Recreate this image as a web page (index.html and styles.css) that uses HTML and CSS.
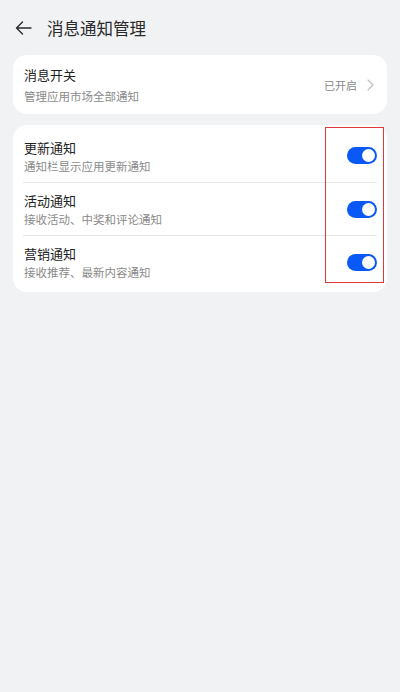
FILE: index.html
```html
<!DOCTYPE html>
<html lang="zh-CN">
<head>
  <meta charset="UTF-8">
  <meta name="viewport" content="width=device-width, initial-scale=1.0">
  <title>消息通知管理</title>
  <link rel="stylesheet" href="styles.css">
</head>
<body>
  <!-- 顶部标题栏 -->
  <div class="header">
    <svg class="back" width="17" height="14" viewBox="0 0 17 14">
      <path d="M16 7H1.5M7.5 1L1.5 7L7.5 13" fill="none" stroke="#2a2a2a" stroke-width="1.4" stroke-linecap="round" stroke-linejoin="round"/>
    </svg>
    <h1>消息通知管理</h1>
  </div>

  <!-- 总开关 -->
  <div class="card">
    <div class="row row-main">
      <div class="text">
        <div class="title">消息开关</div>
        <div class="sub">管理应用市场全部通知</div>
      </div>
      <div class="state">
        已开启
        <svg width="7" height="12" viewBox="0 0 7 12">
          <path d="M1 1L6 6L1 11" fill="none" stroke="#bdbdbd" stroke-width="1.1" stroke-linecap="round" stroke-linejoin="round"/>
        </svg>
      </div>
    </div>
  </div>

  <!-- 分类通知 -->
  <div class="card card-list">
    <div class="row">
      <div class="text">
        <div class="title">更新通知</div>
        <div class="sub">通知栏显示应用更新通知</div>
      </div>
      <span class="switch on"></span>
    </div>
    <div class="row">
      <div class="text">
        <div class="title">活动通知</div>
        <div class="sub">接收活动、中奖和评论通知</div>
      </div>
      <span class="switch on"></span>
    </div>
    <div class="row">
      <div class="text">
        <div class="title">营销通知</div>
        <div class="sub">接收推荐、最新内容通知</div>
      </div>
      <span class="switch on"></span>
    </div>
    <div class="mark"></div>
  </div>
</body>
</html>
```

FILE: styles.css
```css
body {
  margin: 0;
  height: 692px;
  background-color: #f1f2f4;
  font-family: "Noto Sans CJK SC", "Noto Sans", sans-serif;
  color: #222;
}
.header {
  display: flex;
  align-items: center;
  height: 55px;
  padding-left: 15px;
}
.back {
  display: block;
}
.header h1 {
  margin: 0 0 0 15px;
  font-size: 16.5px;
  font-weight: 400;
  color: #2a2a2a;
}
.card {
  margin: 0 13px;
  padding: 0 10px;
  background-color: #fff;
  border-radius: 14px;
}
.card-list {
  position: relative;
  margin-top: 11px;
  padding: 4px 10px;
}
.row {
  display: flex;
  align-items: center;
  justify-content: space-between;
  height: 53px;
  padding-left: 1px;
  box-sizing: border-box;
}
.card-list .row + .row {
  border-top: 1px solid #e6e6e6;
}
.row-main {
  height: 59px;
}
.text {
  display: flex;
  flex-direction: column;
  gap: 1px;
}
.row-main .text {
  gap: 3px;
}
.title {
  font-size: 13px;
  line-height: 19px;
}
.row-main .title {
  line-height: 20px;
}
.sub {
  font-size: 11.5px;
  line-height: 16px;
  color: #8a8a8a;
}
.state {
  display: flex;
  align-items: center;
  gap: 10px;
  margin-right: 3px;
  font-size: 11px;
  color: #8a8a8a;
}
.switch {
  position: relative;
  width: 30px;
  height: 17px;
  border-radius: 9px;
  background-color: #d6d6d6;
}
.switch.on {
  background-color: #0a59f7;
}
.switch::after {
  content: "";
  position: absolute;
  top: 2px;
  left: 2px;
  width: 13px;
  height: 13px;
  border-radius: 50%;
  background-color: #fff;
}
.switch.on::after {
  left: 15px;
}
.mark {
  position: absolute;
  top: 2px;
  left: 312px;
  width: 57px;
  height: 154px;
  border: 1.5px solid #e0383a;
}
```
